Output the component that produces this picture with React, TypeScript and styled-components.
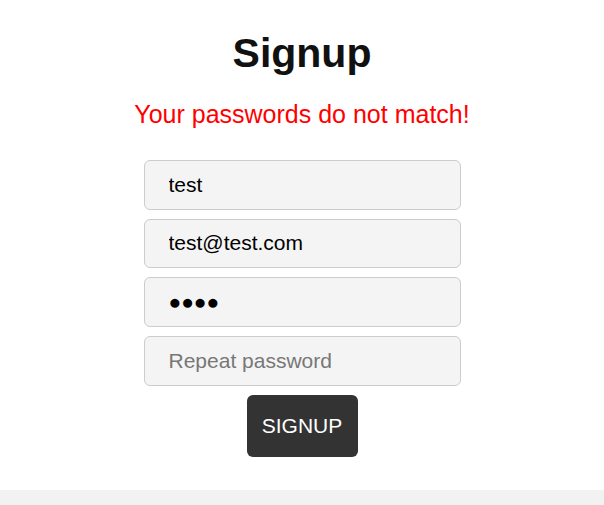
import React from "react";
import styled, { createGlobalStyle } from "styled-components";

const Global = createGlobalStyle`
  html, body { margin: 0; padding: 0; background: #ffffff; }
  body { font-family: "Liberation Sans", Arial, sans-serif; }
`;

const Page = styled.div`
  display: flex;
  flex-direction: column;
  min-height: 505px;
`;

const Main = styled.main`
  display: flex;
  flex-direction: column;
  align-items: center;
  padding-top: 26px;
  padding-bottom: 33px;
`;

const Title = styled.h1`
  margin: 0;
  font-size: 41px;
  line-height: 54px;
  font-weight: 700;
  color: #111111;
`;

const ErrorText = styled.p`
  margin: 19px 0 0;
  font-size: 25px;
  line-height: 30px;
  color: #ff0000;
`;

const Form = styled.form`
  display: flex;
  flex-direction: column;
  align-items: center;
  gap: 9.2px;
  width: 317px;
  margin-top: 31px;
`;

const Field = styled.input`
  box-sizing: border-box;
  width: 100%;
  height: 49.5px;
  padding: 0 24px;
  border: 1px solid #cccccc;
  border-radius: 6px;
  background: #f4f4f4;
  font-family: "Liberation Sans", Arial, sans-serif;
  font-size: 21px;
  color: #000000;
  outline: none;
  &::placeholder { color: #777777; }
`;

const Button = styled.button`
  box-sizing: border-box;
  margin-top: 0.6px;
  width: 111px;
  height: 62px;
  border: none;
  border-radius: 6px;
  background: #333333;
  color: #ffffff;
  font-family: "Liberation Sans", Arial, sans-serif;
  font-size: 21px;
  cursor: pointer;
`;

const Footer = styled.footer`
  flex: 1;
  background: #f2f2f2;
`;

export default function App() {
  return (
    <>
      <Global />
      <Page>
        <Main>
          <Title>Signup</Title>
          <ErrorText>Your passwords do not match!</ErrorText>
          <Form onSubmit={(e) => e.preventDefault()}>
            <Field type="text" defaultValue="test" />
            <Field type="email" defaultValue="test@test.com" />
            <Field type="text" readOnly aria-label="Password" defaultValue={"\u25CF\u25CF\u25CF\u25CF"} />
            <Field type="password" placeholder="Repeat password" />
            <Button type="submit">SIGNUP</Button>
          </Form>
        </Main>
        <Footer />
      </Page>
    </>
  );
}
